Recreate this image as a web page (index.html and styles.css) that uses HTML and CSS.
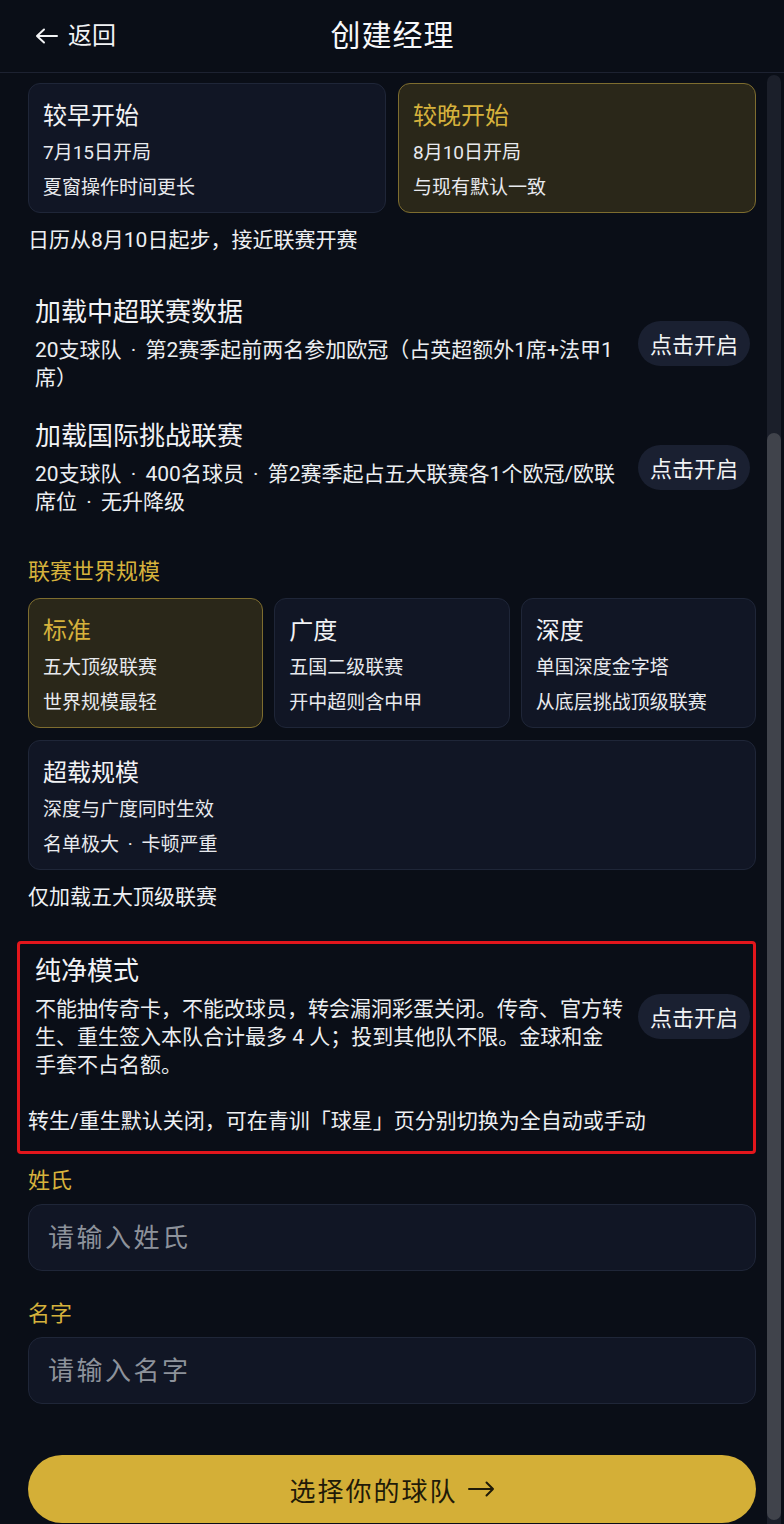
FILE: index.html
```html
<!DOCTYPE html>
<html lang="zh-CN">
<head>
<meta charset="utf-8">
<title>创建经理</title>
<link rel="stylesheet" href="styles.css">
</head>
<body>
<header class="topbar">
  <div class="back">
    <svg class="back-arrow" width="23" height="16" viewBox="0 0 23 16"><path d="M22 8H2M9 1.5L2 8l7 6.5" fill="none" stroke="#f2f3f5" stroke-width="2" stroke-linecap="round" stroke-linejoin="round"/></svg>
    <span>返回</span>
  </div>
  <h1 class="title">创建经理</h1>
  <div class="spacer"></div>
</header>

<main class="content">
  <div class="options two">
    <div class="opt">
      <div class="opt-title">较早开始</div>
      <div class="opt-line">7月15日开局</div>
      <div class="opt-line">夏窗操作时间更长</div>
    </div>
    <div class="opt selected">
      <div class="opt-title">较晚开始</div>
      <div class="opt-line">8月10日开局</div>
      <div class="opt-line">与现有默认一致</div>
    </div>
  </div>
  <p class="note note-a">日历从8月10日起步，接近联赛开赛</p>

  <div class="toggle toggle-1">
    <div class="toggle-text">
      <div class="toggle-title">加载中超联赛数据</div>
      <div class="toggle-desc spaced">20支球队 · 第2赛季起前两名参加欧冠（占英超额外1席+法甲1席）</div>
    </div>
    <button class="pill">点击开启</button>
  </div>

  <div class="toggle toggle-2">
    <div class="toggle-text">
      <div class="toggle-title">加载国际挑战联赛</div>
      <div class="toggle-desc spaced">20支球队 · 400名球员 · 第2赛季起占五大联赛各1个欧冠/欧联席位 · 无升降级</div>
    </div>
    <button class="pill">点击开启</button>
  </div>

  <h2 class="label section-label">联赛世界规模</h2>
  <div class="options three">
    <div class="opt selected">
      <div class="opt-title">标准</div>
      <div class="opt-line">五大顶级联赛</div>
      <div class="opt-line">世界规模最轻</div>
    </div>
    <div class="opt">
      <div class="opt-title">广度</div>
      <div class="opt-line">五国二级联赛</div>
      <div class="opt-line">开中超则含中甲</div>
    </div>
    <div class="opt">
      <div class="opt-title">深度</div>
      <div class="opt-line">单国深度金字塔</div>
      <div class="opt-line">从底层挑战顶级联赛</div>
    </div>
  </div>
  <div class="opt wide">
    <div class="opt-title">超载规模</div>
    <div class="opt-line">深度与广度同时生效</div>
    <div class="opt-line spaced">名单极大 · 卡顿严重</div>
  </div>
  <p class="note note-b">仅加载五大顶级联赛</p>

  <section class="highlight">
    <div class="toggle toggle-pure">
      <div class="toggle-text">
        <div class="toggle-title">纯净模式</div>
        <div class="toggle-desc">不能抽传奇卡，不能改球员，转会漏洞彩蛋关闭。传奇、官方转生、重生签入本队合计最多 4 人；投到其他队不限。金球和金手套不占名额。</div>
      </div>
      <button class="pill">点击开启</button>
    </div>
    <p class="note note-c">转生/重生默认关闭，可在青训「球星」页分别切换为全自动或手动</p>
  </section>

  <label class="label field-label" for="surname">姓氏</label>
  <input class="field" id="surname" type="text" placeholder="请输入姓氏">
  <label class="label field-label second" for="given">名字</label>
  <input class="field" id="given" type="text" placeholder="请输入名字">

  <button class="cta">选择你的球队 <svg class="cta-arrow" width="27" height="16" viewBox="0 0 27 16"><path d="M1 8h24M18.5 1.5L25 8l-6.5 6.5" fill="none" stroke="#1f1a08" stroke-width="2" stroke-linecap="round" stroke-linejoin="round"/></svg></button>
</main>

<div class="scrollbar"><div class="thumb"></div></div>
</body>
</html>
```

FILE: styles.css
```css
html, body {
  margin: 0;
  padding: 0;
  overflow: hidden;
}
body {
  width: 784px;
  min-height: 1524px;
  background: #0a0e17;
  color: #f2f3f5;
  font-family: Roboto, "Noto Sans CJK SC", "Noto Sans", sans-serif;
  position: relative;
}

/* header */
.topbar {
  height: 72px;
  border-bottom: 1px solid #1d2231;
  display: grid;
  grid-template-columns: 1fr auto 1fr;
  align-items: center;
  padding: 0 0 0 35px;
}
.back {
  display: flex;
  align-items: center;
  gap: 10px;
  font-size: 24px;
  line-height: 32px;
  color: #f2f3f5;
}
.back-arrow { display: block; margin-top: -1px; }
.title {
  margin: 0;
  font-size: 30px;
  font-weight: 400;
  letter-spacing: 1px;
  line-height: 40px;
  color: #f7f8fa;
  position: relative;
  left: -17px;
}

/* content */
.content {
  padding: 10px 28px 0 28px;
}

.options {
  display: grid;
  gap: 12px;
}
.options.two { grid-template-columns: 1fr 1fr; }
.options.three { grid-template-columns: 1fr 1fr 1fr; gap: 11px; margin-top: 12px; }

.opt {
  background: #111625;
  border: 1px solid #1f2638;
  border-radius: 12px;
  padding: 16px 14px 7px 14px;
}
.opt.selected {
  background: #2a2719;
  border-color: #7e6d2f;
}
.opt.wide { margin-top: 12px; }
.opt-title {
  font-size: 24px;
  line-height: 32px;
  margin-bottom: 3px;
  color: #f2f3f5;
}
.opt.selected .opt-title { color: #d6b23c; }
.opt-line {
  font-size: 19px;
  line-height: 35px;
  color: #e8eaee;
}

.spaced { word-spacing: 4px; }

.note {
  margin: 0;
  font-size: 21px;
  line-height: 28px;
  color: #eef0f3;
}
.note-a { margin-top: 13px; }
.note-b { margin-top: 13px; }
.note-c { margin-top: 28px; }

/* toggle rows */
.toggle {
  display: flex;
  align-items: center;
  padding: 0 6px 0 7px;
}
.toggle-1 { margin-top: 40px; }
.toggle-2 { margin-top: 26px; }
.toggle-text { flex: 0 0 588.6px; width: 588.6px; }
.toggle-title {
  font-size: 26px;
  line-height: 36px;
  color: #f2f3f5;
}
.toggle-desc {
  margin-top: 6px;
  font-size: 21px;
  line-height: 28px;
  color: #eceef1;
}
.pill {
  flex: 0 0 112px;
  width: 112px;
  height: 45px;
  margin-left: auto;
  border: none;
  border-radius: 23px;
  background: #1a2031;
  color: #f2f3f5;
  font-family: inherit;
  font-size: 22px;
  padding: 0;
}

.label {
  display: block;
  margin: 0;
  font-size: 22px;
  font-weight: 400;
  line-height: 28px;
  color: #d6b23c;
}
.section-label { margin-top: 42px; }

/* highlighted block */
.highlight {
  margin: 30px 0 0 -11px;
  border: 3px solid #e3161c;
  border-radius: 4px;
  padding: 9px 0 16px 8px;
}
.toggle-pure { padding: 0 3px 0 7px; }

/* fields */
.field-label { margin-top: 13px; }
.field-label.second { margin-top: 29px; }
.field {
  display: block;
  box-sizing: border-box;
  width: 100%;
  height: 67px;
  margin-top: 9px;
  background: #111625;
  border: 1px solid #1f2638;
  border-radius: 14px;
  padding: 0 19px;
  font-family: inherit;
  font-size: 26px;
  letter-spacing: 2.5px;
  color: #f2f3f5;
  outline: none;
}
.field::placeholder { color: #8d929b; }

.cta {
  display: flex;
  align-items: center;
  justify-content: center;
  gap: 10px;
  width: 100%;
  height: 68px;
  margin-top: 51px;
  border: none;
  border-radius: 34px;
  background: #d4af37;
  color: #1f1a08;
  font-family: inherit;
  font-size: 26px;
  letter-spacing: 2px;
}
.cta-arrow { display: block; }

/* decorative scrollbar overlay */
.scrollbar {
  position: absolute;
  top: 75px;
  right: 3px;
  width: 14px;
  height: 1460px;
  border-radius: 7px;
  background: #1b1f2a;
}
.thumb {
  position: absolute;
  top: 358px;
  left: 0;
  width: 14px;
  height: 1087px;
  border-radius: 7px;
  background: #40434b;
}
```
